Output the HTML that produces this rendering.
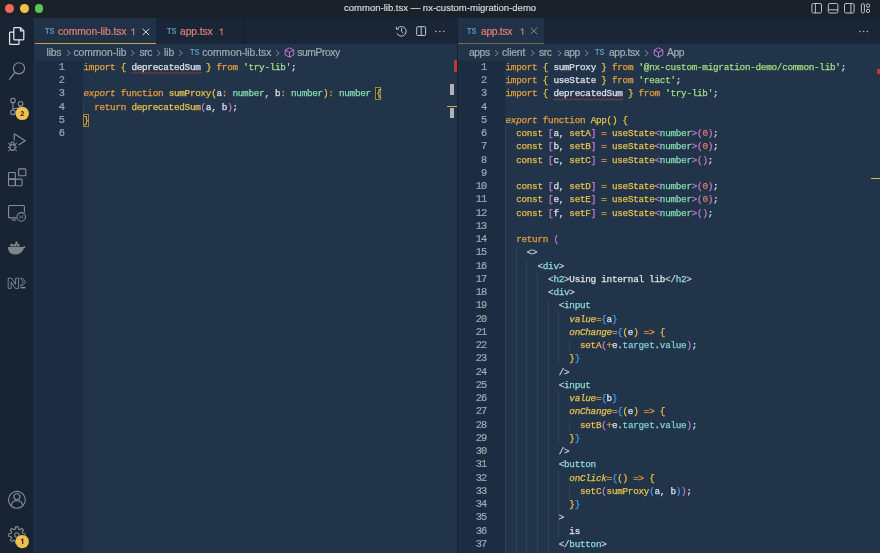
<!DOCTYPE html>
<html><head><meta charset="utf-8">
<style>
*{margin:0;padding:0;box-sizing:border-box}
html,body{width:880px;height:553px;overflow:hidden;will-change:transform;background:#21344a;font-family:"Liberation Sans",sans-serif}
.abs{position:absolute}
.ui{position:absolute;white-space:nowrap;font-size:10.3px;line-height:12px;-webkit-text-stroke:0.2px currentColor}
.ts{position:absolute;font-weight:bold;color:#5b98b8;line-height:9px;letter-spacing:-0.1px;transform:scaleX(0.86);transform-origin:0 0}
.ln{position:absolute;width:40px;text-align:right;font-family:"Liberation Mono",monospace;font-size:10.4px;letter-spacing:-0.94px;line-height:13.25px;color:#a1a8b0;height:13.25px;-webkit-text-stroke:0.2px currentColor}
.cl{position:absolute;white-space:pre;-webkit-text-stroke:0.25px currentColor;font-family:"Liberation Mono",monospace;font-size:9.3px;letter-spacing:-0.2608px;line-height:13.25px;color:#d9dde2;height:13.25px}
.k{color:#e89d3e}
.kc{color:#e6bd48}
.ki{color:#e89d3e;font-style:italic}
.fn{color:#e6c14e}
.v{color:#dde1e6}
.err{color:#dde1e6}
.s{color:#a5dc80}
.t{color:#84dbb2}
.b1{color:#f0c43c}
.b1m{color:#f0c43c;box-shadow:inset 0 0 0 1px #a88a30}
.b2{color:#c67ad8}
.b3{color:#3f9ef2}
.num{color:#e27c62}
.tag{color:#8fd9df}
.tp{color:#c9ced6}
.attr{color:#e6c14e;font-style:italic}
.prop{color:#80cfd0}
.ig{position:absolute;width:1px;background:#30425a}
</style></head><body>
<!-- title bar -->
<div class="abs" style="left:0;top:0;width:880px;height:18px;background:#1b2129"></div>
<div class="abs" style="left:5.1px;top:4.3px;width:8.8px;height:8.8px;border-radius:50%;background:#ec675d"></div>
<div class="abs" style="left:20px;top:4.3px;width:8.8px;height:8.8px;border-radius:50%;background:#f4c04a"></div>
<div class="abs" style="left:34.7px;top:4.3px;width:8.8px;height:8.8px;border-radius:50%;background:#5dc452"></div>

<svg class="abs" style="left:800px;top:0" width="80" height="18" viewBox="800 0 80 18">
 <g fill="none" stroke="#c4c9cf" stroke-width="0.95">
  <rect x="811.9" y="3.5" width="9.6" height="9.5" rx="1.5"/><path d="M815.4 3.5 V13"/>
  <rect x="828.3" y="3.5" width="9.6" height="9.5" rx="1.5"/><path d="M828.3 9.8 H837.9"/>
  <rect x="844.5" y="3.5" width="9.6" height="9.5" rx="1.5"/><path d="M850.9 3.5 V13"/>
  <rect x="861.4" y="3.7" width="3" height="9.2" rx="1.2"/>
  <circle cx="868" cy="5.6" r="1.7"/><circle cx="868" cy="10.9" r="1.7"/>
 </g>
</svg>
<!-- activity bar -->
<div class="abs" style="left:0;top:18px;width:34px;height:535px;background:#182433"></div>
<div class="abs" style="left:34px;top:18px;width:1px;height:535px;background:#1d3856"></div>

<svg class="abs" style="left:0;top:18px" width="34" height="535" viewBox="0 18 34 535">
 <g fill="none" stroke="#e2e6ea" stroke-width="1.25" stroke-linejoin="round">
  <path d="M13.9 32.2 H10.4 Q9.6 32.2 9.6 33 V43.7 Q9.6 44.4 10.4 44.4 H18.2 Q19 44.4 19 43.7 V39.6"/>
  <path d="M14.6 27.6 H20.5 L23.8 30.9 V39 Q23.8 39.8 23 39.8 H14.6 Q13.8 39.8 13.8 39 V28.4 Q13.8 27.6 14.6 27.6 Z"/>
  <path d="M20.5 27.6 V30.9 H23.8"/>
 </g>
 <g fill="none" stroke="#868e97" stroke-width="1.1">
  <circle cx="19" cy="68.3" r="5.6"/>
  <path d="M15.1 72.3 L9.2 79.6" stroke-width="1.3"/>
  <circle cx="13" cy="100.6" r="2.3"/>
  <circle cx="20.6" cy="103.8" r="2.3"/>
  <circle cx="12.9" cy="112.3" r="2.3"/>
  <path d="M12.95 102.9 V110 M20.6 106.1 Q20.6 108.6 13 108.8"/>
  <path d="M14.3 133.8 L25.2 140.8 L18.6 145"/>
  <path d="M14.3 133.8 V140.4"/>
  <path d="M10 144.9 H15 V147.6 Q15 150.4 12.5 150.4 Q10 150.4 10 147.6 Z"/>
  <path d="M10.6 144.9 Q10.8 142 12.5 142 Q14.2 142 14.4 144.9"/>
  <path d="M8.1 143 L10.1 144.6 M16.9 143 L14.9 144.6 M7.9 147.4 H10 M17.1 147.4 H15 M8.1 151 L10.2 149.3 M16.9 151 L14.8 149.3" stroke-width="1"/>
  <rect x="8.5" y="172.5" width="6.8" height="6.6" rx="0.6"/>
  <rect x="8.5" y="179.1" width="6.8" height="6.6" rx="0.6"/>
  <rect x="15.3" y="179.1" width="6.8" height="6.6" rx="0.6"/>
  <rect x="18.6" y="168.9" width="7.2" height="6.8" rx="0.8"/>
  <path d="M16.6 217.9 H9.6 Q8.6 217.9 8.6 216.9 V206.5 Q8.6 205.5 9.6 205.5 H23.4 Q24.4 205.5 24.4 206.5 V212.4"/>
  <circle cx="21.2" cy="216.9" r="4.3"/>
  <path d="M19.3 215.3 L20.6 216.9 L19.3 218.5 M23.1 215.3 L21.8 216.9 L23.1 218.5" stroke-width="0.9"/>
  <path d="M12 220 H15.8" stroke-width="1.2"/>
  <circle cx="16.9" cy="499.8" r="8.4"/>
  <circle cx="16.9" cy="496.8" r="3"/>
  <path d="M11.2 505.6 Q11.6 500.8 16.9 500.8 Q22.2 500.8 22.6 505.6"/>
 </g>
 <g fill="#7d858e">
  <path d="M7.7 246.9 H23.2 Q23.6 245.4 24.6 246.2 Q25.8 246.4 25.6 247 Q24.6 247.6 23.8 248.4 Q21.6 254.4 14.8 254.4 Q8.4 254.4 7.7 246.9 Z"/>
  <rect x="10.2" y="244.1" width="2.9" height="2.5" rx="0.3"/><rect x="13.4" y="244.1" width="2.9" height="2.5" rx="0.3"/><rect x="16.6" y="244.1" width="2.9" height="2.5" rx="0.3"/>
  <rect x="15.4" y="241.6" width="2.3" height="2.3" rx="0.3"/>
 </g>
 <g fill="none" stroke="#868e97" stroke-width="0.9" stroke-linejoin="miter">
  <path d="M8.2 288.4 V278.2 H11.6 L15.6 284.4 V278.2 H18.6 V288.4 H15.4 L11.2 282 V288.4 Z"/>
  <path d="M20.5 278.3 H22.6 L25.6 281.9 L22.6 285.5 H20.5 L23.4 281.9 Z" stroke-width="0.8"/>
 </g>
 <rect x="20.6" y="286.9" width="4.8" height="1.5" fill="#868e97"/>
 <g fill="none" stroke="#868e97" stroke-width="1.1">
  <path d="M15.62 526.90 L18.18 526.90 L18.42 529.09 L20.01 529.75 L21.72 528.37 L23.53 530.18 L22.15 531.89 L22.81 533.48 L25.00 533.72 L25.00 536.28 L22.81 536.52 L22.15 538.11 L23.53 539.82 L21.72 541.63 L20.01 540.25 L18.42 540.91 L18.18 543.10 L15.62 543.10 L15.38 540.91 L13.79 540.25 L12.08 541.63 L10.27 539.82 L11.65 538.11 L10.99 536.52 L8.80 536.28 L8.80 533.72 L10.99 533.48 L11.65 531.89 L10.27 530.18 L12.08 528.37 L13.79 529.75 L15.38 529.09 Z" stroke-linejoin="round"/>
  <circle cx="16.9" cy="535" r="2.2"/>
 </g>
 <circle cx="22.2" cy="113.4" r="6.7" fill="#f1c04c"/>
 <text x="22.2" y="116.1" text-anchor="middle" font-family="Liberation Sans" font-weight="bold" font-size="7.4" fill="#1b1f24">2</text>
 <circle cx="22.2" cy="541.6" r="6.7" fill="#f1c04c"/>
 <path d="M21.2 540.1 L22.7 539.3 V544.1" fill="none" stroke="#1b1f24" stroke-width="1.15"/>
</svg>

<!-- tab bars -->
<div class="abs" style="left:35px;top:18px;width:423px;height:26px;background:#192637"></div>
<div class="abs" style="left:458px;top:18px;width:422px;height:26px;background:#192637"></div>
<div class="abs" style="left:35px;top:18px;width:120.8px;height:26px;background:#203247"></div>
<div class="abs" style="left:35px;top:42.8px;width:120.8px;height:1.2px;background:#c9a23c"></div>
<div class="abs" style="left:458px;top:18px;width:85.8px;height:26px;background:#203247"></div>
<div class="abs" style="left:458px;top:42.8px;width:85.8px;height:1.2px;background:#7a6c48"></div>
<div class="ts" style="left:44.5px;top:26.5px;font-size:8.6px">TS</div>
<svg class="abs" style="left:141.6px;top:27.6px" width="8" height="8" viewBox="0 0 8 8"><path d="M0.7 0.7 L7.1 7.1 M7.1 0.7 L0.7 7.1" stroke="#dfe3e7" stroke-width="0.95"/></svg>
<div class="ts" style="left:166.7px;top:26.5px;font-size:8.6px">TS</div>
<div class="ts" style="left:466.7px;top:26.5px;font-size:8.6px">TS</div>
<svg class="abs" style="left:530.4px;top:27.4px" width="8" height="8" viewBox="0 0 8 8"><path d="M0.6 0.6 L7.2 7.2 M7.2 0.6 L0.6 7.2" stroke="#858d95" stroke-width="0.95"/></svg>
<svg class="abs" style="left:0;top:0" width="880" height="60"><g fill="none" stroke="#e07c72" stroke-width="1.05" stroke-linejoin="round">
<path d="M131.4 30.3 L133.7 28.9 V35.2"/><path d="M219.6 30.3 L221.9 28.9 V35.2"/><path d="M520.6 30.1 L522.8 28.7 V35"/></g></svg>
<div class="abs" style="left:244px;top:18px;width:0.9px;height:26px;background:#121b26"></div>

<svg class="abs" style="left:390px;top:18px" width="67" height="26" viewBox="390 18 67 26">
 <g fill="none" stroke="#c0c6cc" stroke-width="1">
  <path d="M397.6 28.4 A4.8 4.8 0 1 1 397 33.3"/>
  <path d="M396.4 26.6 V29.2 H399"/>
  <path d="M401.6 28.2 V31.4 L403.6 33.4"/>
  <rect x="416.7" y="26.7" width="8.9" height="8.8" rx="0.8"/><path d="M421.2 26.7 V35.5"/>
 </g>
 <g fill="#c0c6cc"><circle cx="435.9" cy="31.5" r="0.75"/><circle cx="439.9" cy="31.5" r="0.75"/><circle cx="443.9" cy="31.5" r="0.75"/></g>
</svg>
<svg class="abs" style="left:850px;top:18px" width="30" height="26" viewBox="850 18 30 26">
 <g fill="#c0c6cc"><circle cx="860" cy="31.4" r="0.75"/><circle cx="863.7" cy="31.4" r="0.75"/><circle cx="867.4" cy="31.4" r="0.75"/></g>
</svg>

<!-- breadcrumbs -->
<div class="abs" style="left:35px;top:44px;width:423px;height:16.6px;background:#21344a"></div>
<div class="abs" style="left:458px;top:44px;width:422px;height:16.6px;background:#21344a"></div>
<div style="color:#a3abb3">
<div id="title" class="ui" style="left:344.00px;top:2.4px;font-size:9.5px;letter-spacing:0.012px;color:#d3d7dc">common-lib.tsx — nx-custom-migration-demo</div>
<div id="t1" class="ui" style="left:58.00px;top:25.5px;font-size:10.3px;letter-spacing:-0.057px;color:#e57f74">common-lib.tsx</div>
<div id="t2" class="ui" style="left:180.00px;top:25.5px;font-size:10.3px;letter-spacing:-0.083px;color:#e57f74">app.tsx</div>
<div id="t3" class="ui" style="left:481.00px;top:25.5px;font-size:10.3px;letter-spacing:-0.292px;color:#e57f74">app.tsx</div>
<div id="b1" class="ui" style="left:46.60px;top:47px;font-size:10.3px;letter-spacing:-0.234px">libs</div>
<div id="b2" class="ui" style="left:73.40px;top:47px;font-size:10.3px;letter-spacing:-0.012px">common-lib</div>
<div id="b3" class="ui" style="left:139.40px;top:47px;font-size:10.3px;letter-spacing:-0.400px">src</div>
<div id="b4" class="ui" style="left:164.00px;top:47px;font-size:10.3px;letter-spacing:0.000px">lib</div>
<div id="b5" class="ui" style="left:202.20px;top:47px;font-size:10.3px;letter-spacing:-0.008px">common-lib.tsx</div>
<div id="b6" class="ui" style="left:297.20px;top:47px;font-size:10.3px;letter-spacing:-0.400px">sumProxy</div>
<div id="r1" class="ui" style="left:469.00px;top:47px;font-size:10.3px;letter-spacing:-0.417px">apps</div>
<div id="r2" class="ui" style="left:502.00px;top:47px;font-size:10.3px;letter-spacing:-0.150px">client</div>
<div id="r3" class="ui" style="left:539.00px;top:47px;font-size:10.3px;letter-spacing:-0.375px">src</div>
<div id="r4" class="ui" style="left:564.00px;top:47px;font-size:10.3px;letter-spacing:-0.450px">app</div>
<div id="r5" class="ui" style="left:609.00px;top:47px;font-size:10.3px;letter-spacing:-0.375px">app.tsx</div>
<div id="r6" class="ui" style="left:667.00px;top:47px;font-size:10.3px;letter-spacing:-0.450px">App</div>
<svg class="abs" style="left:65.5px;top:49.6px" width="6" height="8" viewBox="0 0 6 8"><path d="M1 0.4 L4.2 3.2 L1 6" stroke="#8c949c" stroke-width="0.9" fill="none"/></svg><svg class="abs" style="left:129.9px;top:49.6px" width="6" height="8" viewBox="0 0 6 8"><path d="M1 0.4 L4.2 3.2 L1 6" stroke="#8c949c" stroke-width="0.9" fill="none"/></svg><svg class="abs" style="left:156.4px;top:49.6px" width="6" height="8" viewBox="0 0 6 8"><path d="M1 0.4 L4.2 3.2 L1 6" stroke="#8c949c" stroke-width="0.9" fill="none"/></svg><svg class="abs" style="left:178px;top:49.6px" width="6" height="8" viewBox="0 0 6 8"><path d="M1 0.4 L4.2 3.2 L1 6" stroke="#8c949c" stroke-width="0.9" fill="none"/></svg>
<div class="ts" style="left:189.5px;top:47.5px;font-size:8.6px">TS</div><svg class="abs" style="left:274.6px;top:49.6px" width="6" height="8" viewBox="0 0 6 8"><path d="M1 0.4 L4.2 3.2 L1 6" stroke="#8c949c" stroke-width="0.9" fill="none"/></svg><svg class="abs" style="left:284px;top:47.2px" width="11" height="11" viewBox="0 0 11 11"><g stroke="#c67ad6" stroke-width="0.95" fill="none" stroke-linejoin="round"><path d="M5.5 0.8 L9.8 3.1 V7.9 L5.5 10.2 L1.2 7.9 V3.1 Z"/><path d="M1.2 3.1 L5.5 5.4 L9.8 3.1 M5.5 5.4 V10.2"/></g></svg>
<svg class="abs" style="left:493.6px;top:49.6px" width="6" height="8" viewBox="0 0 6 8"><path d="M1 0.4 L4.2 3.2 L1 6" stroke="#8c949c" stroke-width="0.9" fill="none"/></svg><svg class="abs" style="left:530.4px;top:49.6px" width="6" height="8" viewBox="0 0 6 8"><path d="M1 0.4 L4.2 3.2 L1 6" stroke="#8c949c" stroke-width="0.9" fill="none"/></svg><svg class="abs" style="left:556.6px;top:49.6px" width="6" height="8" viewBox="0 0 6 8"><path d="M1 0.4 L4.2 3.2 L1 6" stroke="#8c949c" stroke-width="0.9" fill="none"/></svg><svg class="abs" style="left:584.2px;top:49.6px" width="6" height="8" viewBox="0 0 6 8"><path d="M1 0.4 L4.2 3.2 L1 6" stroke="#8c949c" stroke-width="0.9" fill="none"/></svg>
<div class="ts" style="left:594.7px;top:47.5px;font-size:8.6px">TS</div><svg class="abs" style="left:644.2px;top:49.6px" width="6" height="8" viewBox="0 0 6 8"><path d="M1 0.4 L4.2 3.2 L1 6" stroke="#8c949c" stroke-width="0.9" fill="none"/></svg><svg class="abs" style="left:653px;top:47.2px" width="11" height="11" viewBox="0 0 11 11"><g stroke="#c67ad6" stroke-width="0.95" fill="none" stroke-linejoin="round"><path d="M5.5 0.8 L9.8 3.1 V7.9 L5.5 10.2 L1.2 7.9 V3.1 Z"/><path d="M1.2 3.1 L5.5 5.4 L9.8 3.1 M5.5 5.4 V10.2"/></g></svg>
</div>

<!-- gutters -->
<div class="abs" style="left:35px;top:60.6px;width:47.6px;height:493px;background:#1c2c42"></div>
<div class="abs" style="left:458px;top:60.6px;width:46.6px;height:493px;background:#1c2c42"></div>
<div class="abs" style="left:457.3px;top:18px;width:0.9px;height:535px;background:#18222e"></div>

<div class="ig" style="left:83.10px;top:100.35px;height:13.25px"></div>
<div class="abs" style="left:375.20px;top:87.10px;width:6.2px;height:13.05px;border:1px solid #9e8637;background:#1b2a3b"></div>
<div class="abs" style="left:83.30px;top:113.60px;width:6.2px;height:13.05px;border:1px solid #9e8637;background:#1b2a3b"></div>
<div class="ig" style="left:505.10px;top:126.85px;height:437.25px"></div>
<div class="ig" style="left:515.74px;top:246.10px;height:318.00px"></div>
<div class="ig" style="left:526.38px;top:259.35px;height:304.75px"></div>
<div class="ig" style="left:537.02px;top:272.60px;height:291.50px"></div>
<div class="ig" style="left:547.66px;top:299.10px;height:265.00px"></div>
<div class="ig" style="left:558.30px;top:312.35px;height:53.00px"></div>
<div class="ig" style="left:568.94px;top:338.85px;height:13.25px"></div>
<div class="ig" style="left:558.30px;top:391.85px;height:53.00px"></div>
<div class="ig" style="left:568.94px;top:418.35px;height:13.25px"></div>
<div class="ig" style="left:558.30px;top:471.35px;height:66.25px"></div>
<div class="ig" style="left:568.94px;top:484.60px;height:13.25px"></div>
<div class="ln" style="top:60.90px;left:24.00px">1</div>
<div class="cl" style="top:60.80px;left:83.50px"><span class="k">import</span> <span class="b1">{</span> <span class="err">deprecatedSum</span> <span class="b1">}</span> <span class="k">from</span> <span class="s">'try-lib'</span>;</div>
<div class="ln" style="top:74.15px;left:24.00px">2</div>
<div class="ln" style="top:87.40px;left:24.00px">3</div>
<div class="cl" style="top:87.30px;left:83.50px"><span class="ki">export</span> <span class="k">function</span> <span class="fn">sumProxy</span><span class="b1">(</span><span class="v">a</span><span class="k">:</span> <span class="t">number</span>, <span class="v">b</span><span class="k">:</span> <span class="t">number</span><span class="b1">)</span><span class="k">:</span> <span class="t">number</span> <span class="b1">{</span></div>
<div class="ln" style="top:100.65px;left:24.00px">4</div>
<div class="cl" style="top:100.55px;left:83.50px">  <span class="k">return</span> <span class="fn">deprecatedSum</span><span class="b2">(</span><span class="v">a</span>, <span class="v">b</span><span class="b2">)</span>;</div>
<div class="ln" style="top:113.90px;left:24.00px">5</div>
<div class="cl" style="top:113.80px;left:83.50px"><span class="b1">}</span></div>
<div class="ln" style="top:127.15px;left:24.00px">6</div>
<div class="ln" style="top:60.90px;left:446.30px">1</div>
<div class="cl" style="top:60.80px;left:505.50px"><span class="k">import</span> <span class="b1">{</span> <span class="v">sumProxy</span> <span class="b1">}</span> <span class="k">from</span> <span class="s">'@nx-custom-migration-demo/common-lib'</span>;</div>
<div class="ln" style="top:74.15px;left:446.30px">2</div>
<div class="cl" style="top:74.05px;left:505.50px"><span class="k">import</span> <span class="b1">{</span> <span class="v">useState</span> <span class="b1">}</span> <span class="k">from</span> <span class="s">'react'</span>;</div>
<div class="ln" style="top:87.40px;left:446.30px">3</div>
<div class="cl" style="top:87.30px;left:505.50px"><span class="k">import</span> <span class="b1">{</span> <span class="err">deprecatedSum</span> <span class="b1">}</span> <span class="k">from</span> <span class="s">'try-lib'</span>;</div>
<div class="ln" style="top:100.65px;left:446.30px">4</div>
<div class="ln" style="top:113.90px;left:446.30px">5</div>
<div class="cl" style="top:113.80px;left:505.50px"><span class="ki">export</span> <span class="k">function</span> <span class="fn">App</span><span class="b1">()</span> <span class="b1">{</span></div>
<div class="ln" style="top:127.15px;left:446.30px">6</div>
<div class="cl" style="top:127.05px;left:505.50px">  <span class="kc">const</span> <span class="b2">[</span><span class="v">a</span>, <span class="fn">setA</span><span class="b2">]</span> <span class="k">=</span> <span class="fn">useState</span><span class="b2">&lt;</span><span class="t">number</span><span class="b2">&gt;</span><span class="b2">(</span><span class="num">0</span><span class="b2">)</span>;</div>
<div class="ln" style="top:140.40px;left:446.30px">7</div>
<div class="cl" style="top:140.30px;left:505.50px">  <span class="kc">const</span> <span class="b2">[</span><span class="v">b</span>, <span class="fn">setB</span><span class="b2">]</span> <span class="k">=</span> <span class="fn">useState</span><span class="b2">&lt;</span><span class="t">number</span><span class="b2">&gt;</span><span class="b2">(</span><span class="num">0</span><span class="b2">)</span>;</div>
<div class="ln" style="top:153.65px;left:446.30px">8</div>
<div class="cl" style="top:153.55px;left:505.50px">  <span class="kc">const</span> <span class="b2">[</span><span class="v">c</span>, <span class="fn">setC</span><span class="b2">]</span> <span class="k">=</span> <span class="fn">useState</span><span class="b2">&lt;</span><span class="t">number</span><span class="b2">&gt;</span><span class="b2">(</span><span class="num"></span><span class="b2">)</span>;</div>
<div class="ln" style="top:166.90px;left:446.30px">9</div>
<div class="ln" style="top:180.15px;left:446.30px">10</div>
<div class="cl" style="top:180.05px;left:505.50px">  <span class="kc">const</span> <span class="b2">[</span><span class="v">d</span>, <span class="fn">setD</span><span class="b2">]</span> <span class="k">=</span> <span class="fn">useState</span><span class="b2">&lt;</span><span class="t">number</span><span class="b2">&gt;</span><span class="b2">(</span><span class="num">0</span><span class="b2">)</span>;</div>
<div class="ln" style="top:193.40px;left:446.30px">11</div>
<div class="cl" style="top:193.30px;left:505.50px">  <span class="kc">const</span> <span class="b2">[</span><span class="v">e</span>, <span class="fn">setE</span><span class="b2">]</span> <span class="k">=</span> <span class="fn">useState</span><span class="b2">&lt;</span><span class="t">number</span><span class="b2">&gt;</span><span class="b2">(</span><span class="num">0</span><span class="b2">)</span>;</div>
<div class="ln" style="top:206.65px;left:446.30px">12</div>
<div class="cl" style="top:206.55px;left:505.50px">  <span class="kc">const</span> <span class="b2">[</span><span class="v">f</span>, <span class="fn">setF</span><span class="b2">]</span> <span class="k">=</span> <span class="fn">useState</span><span class="b2">&lt;</span><span class="t">number</span><span class="b2">&gt;</span><span class="b2">(</span><span class="num"></span><span class="b2">)</span>;</div>
<div class="ln" style="top:219.90px;left:446.30px">13</div>
<div class="ln" style="top:233.15px;left:446.30px">14</div>
<div class="cl" style="top:233.05px;left:505.50px">  <span class="k">return</span> <span class="b2">(</span></div>
<div class="ln" style="top:246.40px;left:446.30px">15</div>
<div class="cl" style="top:246.30px;left:505.50px">    <span class="tp">&lt;&gt;</span></div>
<div class="ln" style="top:259.65px;left:446.30px">16</div>
<div class="cl" style="top:259.55px;left:505.50px">      <span class="tp">&lt;</span><span class="tag">div</span><span class="tp">&gt;</span></div>
<div class="ln" style="top:272.90px;left:446.30px">17</div>
<div class="cl" style="top:272.80px;left:505.50px">        <span class="tp">&lt;</span><span class="tag">h2</span><span class="tp">&gt;</span><span class="v">Using internal lib</span><span class="tp">&lt;/</span><span class="tag">h2</span><span class="tp">&gt;</span></div>
<div class="ln" style="top:286.15px;left:446.30px">18</div>
<div class="cl" style="top:286.05px;left:505.50px">        <span class="tp">&lt;</span><span class="tag">div</span><span class="tp">&gt;</span></div>
<div class="ln" style="top:299.40px;left:446.30px">19</div>
<div class="cl" style="top:299.30px;left:505.50px">          <span class="tp">&lt;</span><span class="tag">input</span></div>
<div class="ln" style="top:312.65px;left:446.30px">20</div>
<div class="cl" style="top:312.55px;left:505.50px">            <span class="attr">value</span><span class="k">=</span><span class="b3">{</span><span class="v">a</span><span class="b3">}</span></div>
<div class="ln" style="top:325.90px;left:446.30px">21</div>
<div class="cl" style="top:325.80px;left:505.50px">            <span class="attr">onChange</span><span class="k">=</span><span class="b3">{</span><span class="b1">(</span><span class="v">e</span><span class="b1">)</span> <span class="k">=&gt;</span> <span class="b1">{</span></div>
<div class="ln" style="top:339.15px;left:446.30px">22</div>
<div class="cl" style="top:339.05px;left:505.50px">              <span class="fn">setA</span><span class="b2">(</span><span class="k">+</span><span class="v">e</span>.<span class="prop">target</span>.<span class="prop">value</span><span class="b2">)</span>;</div>
<div class="ln" style="top:352.40px;left:446.30px">23</div>
<div class="cl" style="top:352.30px;left:505.50px">            <span class="b1">}</span><span class="b3">}</span></div>
<div class="ln" style="top:365.65px;left:446.30px">24</div>
<div class="cl" style="top:365.55px;left:505.50px">          <span class="tp">/&gt;</span></div>
<div class="ln" style="top:378.90px;left:446.30px">25</div>
<div class="cl" style="top:378.80px;left:505.50px">          <span class="tp">&lt;</span><span class="tag">input</span></div>
<div class="ln" style="top:392.15px;left:446.30px">26</div>
<div class="cl" style="top:392.05px;left:505.50px">            <span class="attr">value</span><span class="k">=</span><span class="b3">{</span><span class="v">b</span><span class="b3">}</span></div>
<div class="ln" style="top:405.40px;left:446.30px">27</div>
<div class="cl" style="top:405.30px;left:505.50px">            <span class="attr">onChange</span><span class="k">=</span><span class="b3">{</span><span class="b1">(</span><span class="v">e</span><span class="b1">)</span> <span class="k">=&gt;</span> <span class="b1">{</span></div>
<div class="ln" style="top:418.65px;left:446.30px">28</div>
<div class="cl" style="top:418.55px;left:505.50px">              <span class="fn">setB</span><span class="b2">(</span><span class="k">+</span><span class="v">e</span>.<span class="prop">target</span>.<span class="prop">value</span><span class="b2">)</span>;</div>
<div class="ln" style="top:431.90px;left:446.30px">29</div>
<div class="cl" style="top:431.80px;left:505.50px">            <span class="b1">}</span><span class="b3">}</span></div>
<div class="ln" style="top:445.15px;left:446.30px">30</div>
<div class="cl" style="top:445.05px;left:505.50px">          <span class="tp">/&gt;</span></div>
<div class="ln" style="top:458.40px;left:446.30px">31</div>
<div class="cl" style="top:458.30px;left:505.50px">          <span class="tp">&lt;</span><span class="tag">button</span></div>
<div class="ln" style="top:471.65px;left:446.30px">32</div>
<div class="cl" style="top:471.55px;left:505.50px">            <span class="attr">onClick</span><span class="k">=</span><span class="b3">{</span><span class="b1">()</span> <span class="k">=&gt;</span> <span class="b1">{</span></div>
<div class="ln" style="top:484.90px;left:446.30px">33</div>
<div class="cl" style="top:484.80px;left:505.50px">              <span class="fn">setC</span><span class="b2">(</span><span class="fn">sumProxy</span><span class="b3">(</span><span class="v">a</span>, <span class="v">b</span><span class="b3">)</span><span class="b2">)</span>;</div>
<div class="ln" style="top:498.15px;left:446.30px">34</div>
<div class="cl" style="top:498.05px;left:505.50px">            <span class="b1">}</span><span class="b3">}</span></div>
<div class="ln" style="top:511.40px;left:446.30px">35</div>
<div class="cl" style="top:511.30px;left:505.50px">          <span class="tp">&gt;</span></div>
<div class="ln" style="top:524.65px;left:446.30px">36</div>
<div class="cl" style="top:524.55px;left:505.50px">            <span class="v">is</span></div>
<div class="ln" style="top:537.90px;left:446.30px">37</div>
<div class="cl" style="top:537.80px;left:505.50px">          <span class="tp">&lt;/</span><span class="tag">button</span><span class="tp">&gt;</span></div>

<svg class="abs" style="left:0;top:0" width="880" height="553"><path d="M131.38 73.00 Q132.04 71.70 132.70 73.00 Q133.37 74.30 134.03 73.00 Q134.69 71.70 135.35 73.00 Q136.02 74.30 136.68 73.00 Q137.34 71.70 138.00 73.00 Q138.67 74.30 139.33 73.00 Q139.99 71.70 140.65 73.00 Q141.32 74.30 141.98 73.00 Q142.64 71.70 143.30 73.00 Q143.97 74.30 144.63 73.00 Q145.29 71.70 145.95 73.00 Q146.62 74.30 147.28 73.00 Q147.94 71.70 148.60 73.00 Q149.27 74.30 149.93 73.00 Q150.59 71.70 151.25 73.00 Q151.92 74.30 152.58 73.00 Q153.24 71.70 153.90 73.00 Q154.57 74.30 155.23 73.00 Q155.89 71.70 156.55 73.00 Q157.22 74.30 157.88 73.00 Q158.54 71.70 159.20 73.00 Q159.87 74.30 160.53 73.00 Q161.19 71.70 161.85 73.00 Q162.52 74.30 163.18 73.00 Q163.84 71.70 164.50 73.00 Q165.17 74.30 165.83 73.00 Q166.49 71.70 167.15 73.00 Q167.82 74.30 168.48 73.00 Q169.14 71.70 169.80 73.00 Q170.47 74.30 171.13 73.00 Q171.79 71.70 172.45 73.00 Q173.12 74.30 173.78 73.00 Q174.44 71.70 175.10 73.00 Q175.77 74.30 176.43 73.00 Q177.09 71.70 177.75 73.00 Q178.42 74.30 179.08 73.00 Q179.74 71.70 180.40 73.00 Q181.07 74.30 181.73 73.00 Q182.39 71.70 183.05 73.00 Q183.72 74.30 184.38 73.00 Q185.04 71.70 185.70 73.00 Q186.37 74.30 187.03 73.00 Q187.69 71.70 188.35 73.00 Q189.02 74.30 189.68 73.00 Q190.34 71.70 191.00 73.00 Q191.67 74.30 192.33 73.00 Q192.99 71.70 193.65 73.00 Q194.32 74.30 194.98 73.00 Q195.64 71.70 196.30 73.00 Q196.97 74.30 197.63 73.00 Q198.29 71.70 198.95 73.00 Q199.62 74.30 200.28 73.00 Q200.41 71.70 200.54 73.00" fill="none" stroke="#b33935" stroke-width="0.9"/></svg>
<svg class="abs" style="left:0;top:0" width="880" height="553"><path d="M553.38 99.50 Q554.04 98.20 554.71 99.50 Q555.37 100.80 556.03 99.50 Q556.69 98.20 557.36 99.50 Q558.02 100.80 558.68 99.50 Q559.34 98.20 560.01 99.50 Q560.67 100.80 561.33 99.50 Q561.99 98.20 562.66 99.50 Q563.32 100.80 563.98 99.50 Q564.64 98.20 565.31 99.50 Q565.97 100.80 566.63 99.50 Q567.29 98.20 567.96 99.50 Q568.62 100.80 569.28 99.50 Q569.94 98.20 570.61 99.50 Q571.27 100.80 571.93 99.50 Q572.59 98.20 573.26 99.50 Q573.92 100.80 574.58 99.50 Q575.24 98.20 575.91 99.50 Q576.57 100.80 577.23 99.50 Q577.89 98.20 578.56 99.50 Q579.22 100.80 579.88 99.50 Q580.54 98.20 581.21 99.50 Q581.87 100.80 582.53 99.50 Q583.19 98.20 583.86 99.50 Q584.52 100.80 585.18 99.50 Q585.84 98.20 586.51 99.50 Q587.17 100.80 587.83 99.50 Q588.49 98.20 589.16 99.50 Q589.82 100.80 590.48 99.50 Q591.14 98.20 591.81 99.50 Q592.47 100.80 593.13 99.50 Q593.79 98.20 594.46 99.50 Q595.12 100.80 595.78 99.50 Q596.44 98.20 597.11 99.50 Q597.77 100.80 598.43 99.50 Q599.09 98.20 599.76 99.50 Q600.42 100.80 601.08 99.50 Q601.74 98.20 602.41 99.50 Q603.07 100.80 603.73 99.50 Q604.39 98.20 605.06 99.50 Q605.72 100.80 606.38 99.50 Q607.04 98.20 607.71 99.50 Q608.37 100.80 609.03 99.50 Q609.69 98.20 610.36 99.50 Q611.02 100.80 611.68 99.50 Q612.34 98.20 613.01 99.50 Q613.67 100.80 614.33 99.50 Q614.99 98.20 615.66 99.50 Q616.32 100.80 616.98 99.50 Q617.64 98.20 618.31 99.50 Q618.97 100.80 619.63 99.50 Q620.29 98.20 620.96 99.50 Q621.62 100.80 622.28 99.50 Q622.41 98.20 622.54 99.50" fill="none" stroke="#b33935" stroke-width="0.9"/></svg>
<!-- overview ruler markers -->
<div class="abs" style="left:453.7px;top:60.3px;width:3.5px;height:11.5px;background:#bd3a32"></div>
<div class="abs" style="left:450px;top:83.5px;width:4px;height:11.8px;background:#aeb2b6"></div>
<div class="abs" style="left:447px;top:106.2px;width:10px;height:1.3px;background:#cfb04a"></div>
<div class="abs" style="left:450px;top:107.5px;width:4px;height:10.8px;background:#aeb2b6"></div>
<div class="abs" style="left:877px;top:69px;width:3px;height:5px;background:#c43a30"></div>
<div class="abs" style="left:871px;top:178.3px;width:9px;height:1.2px;background:#d8b848"></div>
</body></html>
